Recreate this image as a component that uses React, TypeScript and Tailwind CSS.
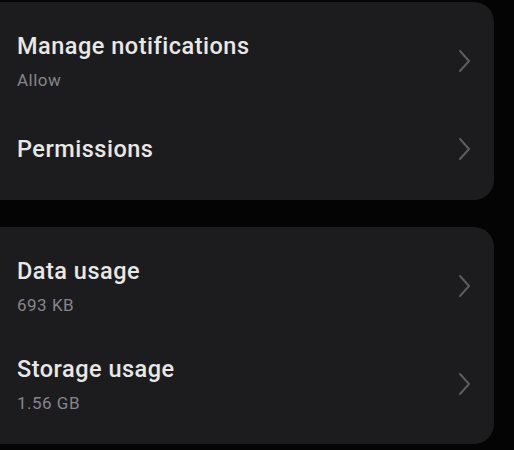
import React from "react";

type Item = { title: string; sub?: string };

const groups: Item[][] = [
    [{ title: "Manage notifications", sub: "Allow" }, { title: "Permissions" }],
    [{ title: "Data usage", sub: "693 KB" }, { title: "Storage usage", sub: "1.56 GB" }],
];

function Chevron() {
    return (
        <svg width="13" height="24" viewBox="0 0 13 24" fill="none" className="shrink-0">
            <path d="M2 2 L11 12 L2 22" stroke="#5c5c60" strokeWidth="2" strokeLinecap="round" strokeLinejoin="round" />
        </svg>
    );
}

function Row({ item }: { item: Item }) {
    return (
        <div className={`flex items-center justify-between pl-[37px] pr-[23px] ${item.sub ? "h-[98px]" : "h-[78px]"}`}>
            <div className="flex flex-col">
                <span className="text-[23.5px] leading-[26px] tracking-[0.5px] font-medium text-[#e8e8e8]">{item.title}</span>
                {item.sub && <span className="mt-[11px] text-[17px] leading-[20px] tracking-[0.5px] text-[#86858c]">{item.sub}</span>}
            </div>
            <Chevron />
        </div>
    );
}

export default function App() {
    return (
        <div className="w-[514px] h-[450px] overflow-hidden bg-[#040404] pt-[2px]" style={{ fontFamily: "Roboto, 'Noto Sans', sans-serif" }}>
            <div className="flex flex-col gap-[27px] -ml-[20px] w-[514px]">
                {groups.map((g, i) => (
                    <div key={i} className={`bg-[#1c1c1e] rounded-[20px] ${i === 0 ? "pt-[10px] pb-[12px]" : "pt-[10px] pb-[11px]"}`}>
                        {g.map((it) => (
                            <Row key={it.title} item={it} />
                        ))}
                    </div>
                ))}
            </div>
        </div>
    );
}
